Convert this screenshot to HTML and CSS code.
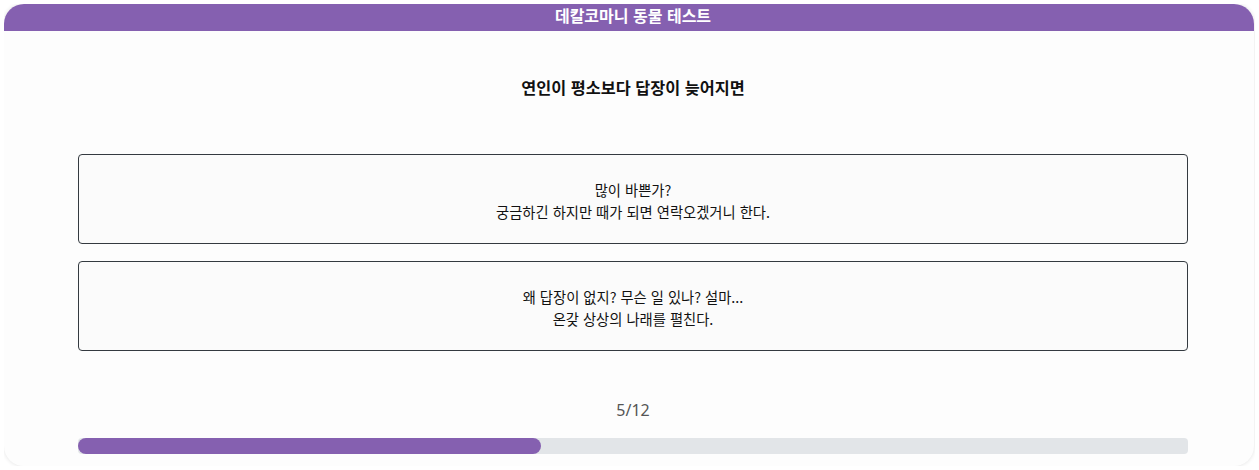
FILE: index.html
```html
<!DOCTYPE html>
<html lang="ko">
<head>
<meta charset="utf-8" />
<title>데칼코마니 동물 테스트</title>
<link rel="stylesheet" href="styles.css">
</head>
<body>
<div class="card">
	<div class="header">데칼코마니 동물 테스트</div>
	<div class="main">
		<div class="question">연인이 평소보다 답장이 늦어지면</div>
		<ul class="answers">
			<li class="answer">많이 바쁜가?<br>궁금하긴 하지만 때가 되면 연락오겠거니 한다.</li>
			<li class="answer">왜 답장이 없지? 무슨 일 있나? 설마...<br>온갖 상상의 나래를 펼친다.</li>
		</ul>
		<div class="count">5/12</div>
		<div class="progress">
			<div class="bar" style="width: 41.67%;"></div>
		</div>
	</div>
</div>
</body>
</html>
```

FILE: styles.css
```css
body{
	margin:4px;
	background:#fff;
	font-family:"Noto Sans CJK KR", "Noto Sans", sans-serif;
	color:#111;
}
.card{
	width:1250px;
	height:462px;
	box-sizing:border-box;
	padding-left:8px;
	background:#fdfdfd;
	border-radius:20px;
	box-shadow:0 0 4px rgba(0,0,0,0.12);
}
.header{
	margin-left:-8px;
	padding:1px 0 0 8px;
	height:26px;
	line-height:21px;
	background:#8560b0;
	border-radius:20px 20px 0 0;
	color:#fff;
	text-align:center;
	font-size:16px;
	font-weight:bold;
}
.main{
	width:1110px;
	margin:0 auto;
}
.question{
	margin-top:45px;
	line-height:22px;
	font-size:16.3px;
	font-weight:bold;
	text-align:center;
}
.answers{
	list-style:none;
	margin:56px 0 0;
	padding:0;
	display:flex;
	flex-direction:column;
	gap:17px;
}
.answer{
	height:90px;
	box-sizing:border-box;
	display:flex;
	align-items:center;
	justify-content:center;
	text-align:center;
	border:1px solid #343a40;
	border-radius:4px;
	background:#fbfbfb;
	font-size:14.3px;
	line-height:22px;
	padding-top:4px;
}
.count{
	margin-top:47px;
	line-height:24px;
	font-family:"Noto Sans", "Noto Sans CJK KR", sans-serif;
	font-size:16px;
	color:#555;
	text-align:center;
}
.progress{
	margin-top:16px;
	height:16px;
	background:#e2e5e8;
	border-radius:4px;
}
.progress .bar{
	height:100%;
	background:#8560b0;
	border-radius:8px;
}
```
